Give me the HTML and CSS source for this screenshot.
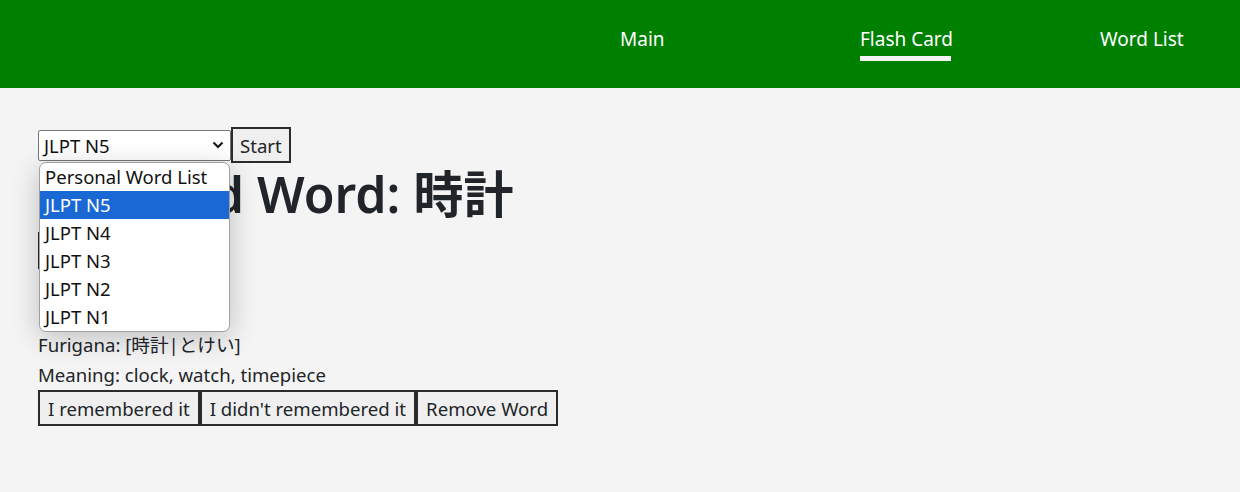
FILE: index.html
```html
<!DOCTYPE html>
<html lang="ja">
<head>
<meta charset="utf-8">
<title>Flash Card</title>
<link rel="stylesheet" href="styles.css">
</head>
<body>
<header class="topbar">
  <nav class="nav">
    <a class="nav-item" href="#">Main</a>
    <a class="nav-item active" href="#">Flash Card</a>
    <a class="nav-item last" href="#">Word List</a>
  </nav>
</header>
<main class="content">
  <div class="controls">
    <div class="select-wrap">
      <div class="select-box">
        <span class="select-value">JLPT N5</span>
        <svg class="chevron" width="12" height="8" viewBox="0 0 12 8"><path d="M1.5 1.5 L6 6 L10.5 1.5" fill="none" stroke="#111" stroke-width="2"/></svg>
      </div>
      <ul class="dropdown">
        <li class="option">Personal Word List</li>
        <li class="option selected">JLPT N5</li>
        <li class="option">JLPT N4</li>
        <li class="option">JLPT N3</li>
        <li class="option">JLPT N2</li>
        <li class="option">JLPT N1</li>
      </ul>
    </div>
    <button class="btn start">Start</button>
  </div>
  <h1 class="title">Selected Word: 時計</h1>
  <button class="btn reveal">Show Answer</button>
  <div class="answer">
    <p class="line">Furigana: [時計|とけい]</p>
    <p class="line">Meaning: clock, watch, timepiece</p>
    <div class="actions">
      <button class="btn">I remembered it</button><button class="btn">I didn't remembered it</button><button class="btn">Remove Word</button>
    </div>
  </div>
</main>
</body>
</html>
```
FILE: styles.css
```css
* { box-sizing: border-box; }
html, body { margin: 0; padding: 0; }
body {
  background: #f4f4f4;
  color: #212529;
  font-family: "Noto Sans", "Noto Sans CJK JP", sans-serif;
  font-size: 18.6px;
  width: 1240px;
  height: 492px;
  overflow: hidden;
}
.topbar {
  background: #008000;
  height: 88px;
}
.nav {
  margin-left: 620px;
  display: flex;
  align-items: flex-start;
  padding-top: 26px;
}
.nav-item {
  width: 240px;
  color: #fff;
  text-decoration: none;
  font-size: 19px;
  line-height: 26px;
  display: inline-flex;
  flex-direction: column;
  align-items: flex-start;
}
.nav-item.last { width: auto; }
.nav-item.active::after {
  content: "";
  display: block;
  width: 91px;
  height: 5px;
  background: #f4f4f4;
  margin-top: 4px;
}
.content {
  padding: 39px 38px 0;
}
.controls {
  display: flex;
  align-items: center;
}
.select-wrap { position: relative; }
.select-box {
  width: 193px;
  height: 31px;
  background: #fff;
  border: 1px solid #767676;
  border-radius: 2px;
  display: flex;
  align-items: center;
  justify-content: space-between;
  padding: 0 6px 0 5px;
  font-size: 18.5px;
  color: #111;
}
.dropdown {
  position: absolute;
  left: 1px;
  top: 32px;
  width: 191px;
  margin: 0;
  padding: 0;
  list-style: none;
  background: #fff;
  border: 1px solid #a0a0a0;
  border-radius: 7px;
  overflow: hidden;
  box-shadow: 0 6px 28px rgba(0,0,0,0.22);
  z-index: 5;
}
.option {
  height: 28px;
  line-height: 27px;
  padding-left: 5px;
  font-size: 18.5px;
  color: #111;
}
.option.selected { background: #1a68d4; color: #fff; }
.btn {
  font-family: inherit;
  font-size: 18.6px;
  color: #212529;
  background: #efefef;
  border: 2px solid #2b2b2b;
  padding: 0 8px;
  height: 36px;
  margin: 0;
  border-radius: 0;
}
.btn.start { padding: 0 7px; }
.title {
  font-size: 50px;
  font-weight: 600;
  margin: -1px 0 6px;
  line-height: 64px;
}
.reveal { height: 37px; }
.answer { margin-top: 61px; }
.line { margin: 0; line-height: 30px; }
.actions { display: flex; }
```
